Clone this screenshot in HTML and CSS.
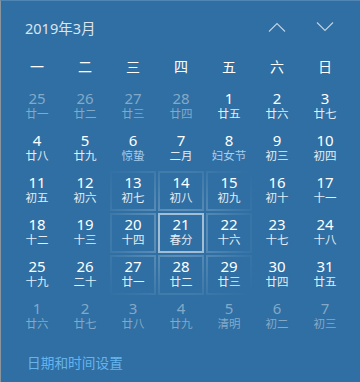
FILE: index.html
```html
<!DOCTYPE html>
<html lang="zh-CN">
<head>
<meta charset="utf-8">
<title>日历</title>
<link rel="stylesheet" href="styles.css">
</head>
<body>
<div class="panel">
  <div class="header">
    <div class="title">2019年3月</div>
    <div class="nav">
      <span class="navbtn"><svg width="18" height="10" viewBox="0 0 18 10"><polyline points="1,9.5 9,1.5 17,9.5" fill="none" stroke="#c3d3e1" stroke-width="1.1"/></svg></span>
      <span class="navbtn"><svg width="18" height="10" viewBox="0 0 18 10"><polyline points="1,0.5 9,8.5 17,0.5" fill="none" stroke="#c3d3e1" stroke-width="1.1"/></svg></span>
    </div>
  </div>
  <div class="weekdays">
    <span>一</span><span>二</span><span>三</span><span>四</span><span>五</span><span>六</span><span>日</span>
  </div>
  <div class="grid">
    <div class="cell o"><span class="num">25</span><span class="lunar">廿一</span></div>
    <div class="cell o"><span class="num">26</span><span class="lunar">廿二</span></div>
    <div class="cell o"><span class="num">27</span><span class="lunar">廿三</span></div>
    <div class="cell o"><span class="num">28</span><span class="lunar">廿四</span></div>
    <div class="cell"><span class="num">1</span><span class="lunar">廿五</span></div>
    <div class="cell"><span class="num">2</span><span class="lunar">廿六</span></div>
    <div class="cell"><span class="num">3</span><span class="lunar">廿七</span></div>

    <div class="cell"><span class="num">4</span><span class="lunar">廿八</span></div>
    <div class="cell"><span class="num">5</span><span class="lunar">廿九</span></div>
    <div class="cell"><span class="num">6</span><span class="lunar fest">惊蛰</span></div>
    <div class="cell"><span class="num">7</span><span class="lunar">二月</span></div>
    <div class="cell"><span class="num">8</span><span class="lunar fest">妇女节</span></div>
    <div class="cell"><span class="num">9</span><span class="lunar">初三</span></div>
    <div class="cell"><span class="num">10</span><span class="lunar">初四</span></div>

    <div class="cell"><span class="num">11</span><span class="lunar">初五</span></div>
    <div class="cell"><span class="num">12</span><span class="lunar">初六</span></div>
    <div class="cell lit"><span class="num">13</span><span class="lunar">初七</span></div>
    <div class="cell lit"><span class="num">14</span><span class="lunar">初八</span></div>
    <div class="cell lit"><span class="num">15</span><span class="lunar">初九</span></div>
    <div class="cell"><span class="num">16</span><span class="lunar">初十</span></div>
    <div class="cell"><span class="num">17</span><span class="lunar">十一</span></div>

    <div class="cell"><span class="num">18</span><span class="lunar">十二</span></div>
    <div class="cell"><span class="num">19</span><span class="lunar">十三</span></div>
    <div class="cell lit"><span class="num">20</span><span class="lunar">十四</span></div>
    <div class="cell hov"><span class="num">21</span><span class="lunar">春分</span></div>
    <div class="cell lit"><span class="num">22</span><span class="lunar">十六</span></div>
    <div class="cell"><span class="num">23</span><span class="lunar">十七</span></div>
    <div class="cell"><span class="num">24</span><span class="lunar">十八</span></div>

    <div class="cell"><span class="num">25</span><span class="lunar">十九</span></div>
    <div class="cell"><span class="num">26</span><span class="lunar">二十</span></div>
    <div class="cell lit"><span class="num">27</span><span class="lunar">廿一</span></div>
    <div class="cell lit"><span class="num">28</span><span class="lunar">廿二</span></div>
    <div class="cell lit"><span class="num">29</span><span class="lunar">廿三</span></div>
    <div class="cell"><span class="num">30</span><span class="lunar">廿四</span></div>
    <div class="cell"><span class="num">31</span><span class="lunar">廿五</span></div>

    <div class="cell o"><span class="num">1</span><span class="lunar">廿六</span></div>
    <div class="cell o"><span class="num">2</span><span class="lunar">廿七</span></div>
    <div class="cell o"><span class="num">3</span><span class="lunar">廿八</span></div>
    <div class="cell o"><span class="num">4</span><span class="lunar">廿九</span></div>
    <div class="cell o"><span class="num">5</span><span class="lunar">清明</span></div>
    <div class="cell o"><span class="num">6</span><span class="lunar">初二</span></div>
    <div class="cell o"><span class="num">7</span><span class="lunar">初三</span></div>
  </div>
  <div class="footer"><span class="link">日期和时间设置</span></div>
</div>
</body>
</html>
```
FILE: styles.css
```css
html, body {
  margin: 0;
  padding: 0;
}
body {
  width: 360px;
  height: 382px;
  overflow: hidden;
  background: #2f6fa3;
  font-family: "Noto Sans", "Noto Sans CJK SC", sans-serif;
  color: #ffffff;
}
.panel {
  height: 381px;
  border-top: 1px solid #4f86b4;
  border-left: 1px solid #8a949c;
}
.header {
  height: 48px;
  display: flex;
  justify-content: space-between;
  padding-right: 11px;
}
.title {
  padding-top: 17px;
  padding-left: 24px;
  font-size: 14.5px;
  line-height: 20px;
  color: #dbe5ee;
}
.nav {
  display: flex;
}
.navbtn {
  width: 48px;
  display: flex;
  justify-content: center;
  padding-top: 21px;
  height: 10px;
}
.navbtn svg {
  display: block;
}
.weekdays {
  height: 37px;
  padding-left: 12px;
  display: grid;
  grid-template-columns: repeat(7, 48px);
  font-family: "Noto Sans CJK SC", sans-serif;
  font-size: 14px;
  line-height: 16px;
  box-sizing: border-box;
  padding-top: 9px;
}
.weekdays span {
  text-align: center;
}
.grid {
  padding-left: 12px;
  display: grid;
  grid-template-columns: repeat(7, 48px);
  grid-auto-rows: 42px;
}
.cell {
  margin: 1px;
  border: 2px solid transparent;
  display: flex;
  flex-direction: column;
  align-items: center;
}
.num {
  font-size: 15px;
  line-height: 18px;
  color: #ffffff;
}
.lunar {
  font-family: "Noto Sans CJK SC", sans-serif;
  font-size: 11.5px;
  line-height: 12px;
  color: #e4edf5;
}
.lunar.fest {
  color: #a9cdee;
}
.cell.o .num,
.cell.o .lunar {
  color: #83a9c9;
}
.cell.lit {
  background:
    linear-gradient(#2f6fa3, #2f6fa3) padding-box,
    radial-gradient(circle 96px at 176px 232px, rgba(255,255,255,0.3) 0%, rgba(255,255,255,0.17) 40%, rgba(255,255,255,0.05) 75%, rgba(255,255,255,0) 100%) border-box fixed;
}
.cell.hov {
  border-color: rgba(255,255,255,0.55);
}
.footer {
  padding-top: 13px;
  padding-left: 26px;
}
.link {
  font-family: "Noto Sans CJK SC", sans-serif;
  font-size: 13.7px;
  line-height: 20px;
  color: #66b4ef;
}
```
